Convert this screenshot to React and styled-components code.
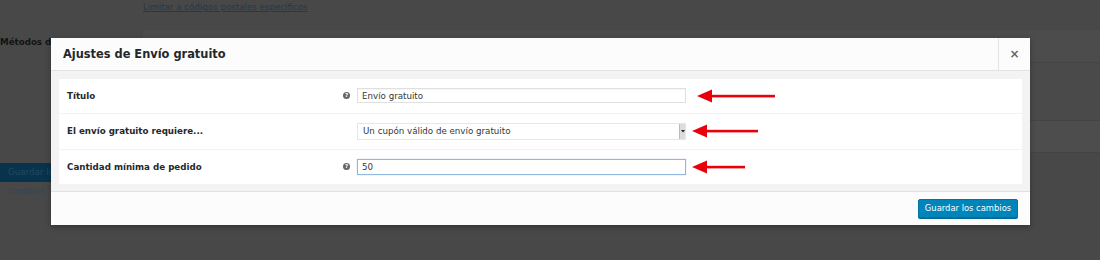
import React from 'react'
import styled, { createGlobalStyle } from 'styled-components'

const GlobalStyle = createGlobalStyle`
  html, body {
    margin: 0;
    padding: 0;
    background: #484848;
    font-family: 'DejaVu Sans', 'Noto Sans', sans-serif;
    font-size: 8.7px;
  }
`

const rows = [
  { label: 'Título', help: true, kind: 'text', value: 'Envío gratuito', arrow: { gap: 11, len: 78 } },
  { label: 'El envío gratuito requiere...', help: false, kind: 'select', value: 'Un cupón válido de envío gratuito', arrow: { gap: 6, len: 66 } },
  { label: 'Cantidad mínima de pedido', help: true, kind: 'text', value: '50', focused: true, arrow: { gap: 6, len: 53 } },
]

const RedArrow = ({ gap, len }) => (
  <S_Arrow style={{ marginLeft: gap }} width={len} height="14" viewBox={`0 0 ${len} 14`}>
    <polygon points={`0,7 15,0.5 15,13.5`} fill="#e8000b" />
    <rect x="13" y="5.8" width={len - 13} height="2.6" fill="#e8000b" />
  </S_Arrow>
)

export default function App() {
  return (
    <>
      <GlobalStyle />
      <S_Page>
        <S_BackLink>Limitar a códigos postales específicos</S_BackLink>
        <S_BackSection>
          <S_BackHeading>Métodos de envío</S_BackHeading>
          <S_BackTable>
            <S_BackTableHead />
            <S_BackTableRow />
            <S_BackTableFoot />
          </S_BackTable>
        </S_BackSection>
        <S_BackButton>Guardar los cambios</S_BackButton>
      </S_Page>

      <S_Modal>
        <S_Header>
          <S_Title>Ajustes de Envío gratuito</S_Title>
          <S_Close>×</S_Close>
        </S_Header>
        <S_Body>
          <S_Form>
            {rows.map((r) => (
              <S_Row key={r.label}>
                <S_Label>{r.label}</S_Label>
                <S_Field>
                  <S_HelpSlot>{r.help && <S_Help>?</S_Help>}</S_HelpSlot>
                  {r.kind === 'select' ? (
                    <S_Select>
                      <span>{r.value}</span>
                      <S_Stepper>
                        <svg width="4" height="4" viewBox="0 0 4 4">
                          <polygon points="0,1 4,1 2,3.5" fill="#222" />
                        </svg>
                      </S_Stepper>
                    </S_Select>
                  ) : (
                    <S_Input readOnly value={r.value} focused={r.focused ? 1 : 0} />
                  )}
                  <RedArrow {...r.arrow} />
                </S_Field>
              </S_Row>
            ))}
          </S_Form>
        </S_Body>
        <S_Footer>
          <S_SaveButton>Guardar los cambios</S_SaveButton>
        </S_Footer>
      </S_Modal>
    </>
  )
}

const S_Page = styled.div`
  position: relative;
  width: 1100px;
  height: 260px;
  overflow: hidden;
`

const S_BackLink = styled.div`
  padding: 2px 0 0 143px;
  height: 10px;
  color: #1d3a50;
  text-decoration: underline;
`

const S_BackSection = styled.div`
  display: flex;
  margin-top: 18px;
`

const S_BackHeading = styled.div`
  width: 143px;
  padding-top: 7px;
  font-weight: bold;
  color: #131313;
`

const S_BackTable = styled.div`
  flex: 1;
  display: flex;
  flex-direction: column;
  height: 123px;
  background: #4a4a4a;
`

const S_BackTableHead = styled.div`
  height: 32px;
  background: #4c4c4c;
  border-bottom: 1px solid #444;
`

const S_BackTableRow = styled.div`
  height: 57px;
  border-bottom: 1px solid #444;
`

const S_BackTableFoot = styled.div`
  flex: 1;
  background: #4d4d4d;
  border-bottom: 1px solid #444;
`

const S_BackButton = styled.div`
  margin-top: 10px;
  width: 80px;
  height: 19px;
  padding-left: 8px;
  line-height: 19px;
  background: #08334c;
  color: #254a60;
`

const S_Modal = styled.section`
  position: absolute;
  left: 51px;
  top: 38px;
  width: 979px;
  height: 187px;
  display: flex;
  flex-direction: column;
  background: #fcfcfc;
  box-shadow: 0 2px 6px rgba(0, 0, 0, 0.3);
`

const S_Header = styled.header`
  display: flex;
  align-items: stretch;
  height: 32px;
  border-bottom: 1px solid #e3e3e3;
  background: #fcfcfc;
`

const S_Title = styled.h1`
  flex: 1;
  margin: 0;
  padding-left: 12px;
  display: flex;
  align-items: center;
  font-size: 11.4px;
  font-weight: bold;
  color: #23282d;
`

const S_Close = styled.button`
  width: 32px;
  padding: 0;
  border: none;
  border-left: 1px solid #e3e3e3;
  background: transparent;
  font-family: 'DejaVu Sans', sans-serif;
  font-size: 12px;
  font-weight: bold;
  color: #666;
  cursor: pointer;
`

const S_Body = styled.div`
  flex: 1;
  padding: 8px 8px 7px;
  background: #f3f3f3;
  border-bottom: 1px solid #e1e1e1;
`

const S_Form = styled.div`
  display: flex;
  flex-direction: column;
  background: #fff;
`

const S_Row = styled.div`
  display: grid;
  grid-template-columns: 276px 1fr;
  align-items: center;
  height: 34px;
  border-top: 1px solid #f3f3f3;

  &:first-child {
    border-top: none;
  }

  &:nth-child(2) {
    height: 35px;
  }
`

const S_Label = styled.div`
  padding-left: 8px;
  font-weight: bold;
  color: #23282d;
`

const S_Field = styled.div`
  display: flex;
  align-items: center;
`

const S_HelpSlot = styled.div`
  width: 22px;
  display: flex;
  justify-content: flex-start;
  padding-left: 8px;
  box-sizing: border-box;
`

const S_Help = styled.span`
  width: 7px;
  height: 7px;
  border-radius: 50%;
  background: #666;
  color: #fff;
  font-size: 5.5px;
  font-weight: bold;
  line-height: 7px;
  text-align: center;
`

const S_Input = styled.input`
  box-sizing: border-box;
  width: 329px;
  height: ${(p) => (p.focused ? 16 : 15)}px;
  margin: 0;
  padding: 0 4px;
  border: 1px solid ${(p) => (p.focused ? '#8fb8de' : '#e0e0e0')};
  box-shadow: ${(p) => (p.focused ? '0 0 1px #a7c8e6' : 'inset 0 1px 1px rgba(0,0,0,0.04)')};
  outline: none;
  background: #fff;
  font-family: 'DejaVu Sans', sans-serif;
  font-size: 8.7px;
  color: #32373c;
`

const S_Select = styled.div`
  box-sizing: border-box;
  width: 329px;
  height: 17px;
  display: flex;
  align-items: center;
  justify-content: space-between;
  padding-left: 5px;
  border: 1px solid #e6e6e6;
  background: #fff;
  color: #32373c;
`

const S_Stepper = styled.div`
  width: 5px;
  height: 15px;
  display: flex;
  align-items: center;
  justify-content: center;
  background: #dcdcdc;
  border-left: 1px solid #bbb;
`

const S_Arrow = styled.svg`
  display: block;
  flex: none;
`

const S_Footer = styled.footer`
  height: 34px;
  display: flex;
  align-items: center;
  justify-content: flex-end;
  padding-right: 12px;
  background: #fcfcfc;
`

const S_SaveButton = styled.button`
  height: 19px;
  width: 100px;
  padding: 0;
  border: 1px solid #0073aa;
  border-radius: 2px;
  background: #0085ba;
  box-shadow: 0 1px 0 #006799;
  color: #fff;
  font-family: 'DejaVu Sans', sans-serif;
  font-size: 8.4px;
  cursor: pointer;
`
